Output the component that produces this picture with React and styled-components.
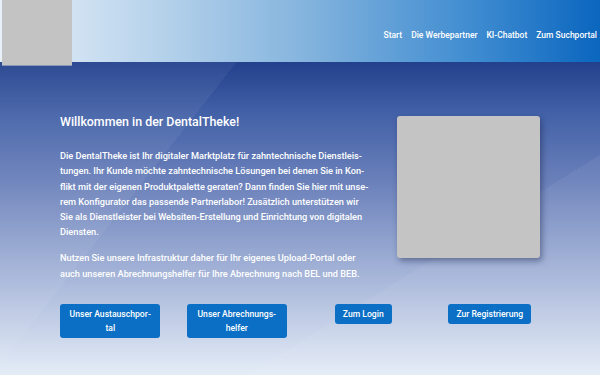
import React from "react";
import styled, { createGlobalStyle } from "styled-components";

const Global = createGlobalStyle`
  html, body { margin: 0; padding: 0; }
  body { font-family: Roboto, "Noto Sans", "Liberation Sans", sans-serif; }
  * { box-sizing: border-box; }
`;

const Page = styled.div`
  width: 100%;
  min-height: 100vh;
  display: flex;
  flex-direction: column;
`;

const Header = styled.header`
  height: 62px;
  display: flex;
  align-items: flex-start;
  background: linear-gradient(90deg, #e8f0f9 0%, #b9d4ec 25%, #86b5de 50%, #3c8ad0 80%, #0b66be 100%);
  position: relative;
  z-index: 2;
`;

const Logo = styled.div`
  width: 70px;
  height: 66px;
  margin-left: 2px;
  background: #c3c3c3;
  border-bottom: 1px solid #8a98b6;
  flex: none;
`;

const Nav = styled.nav`
  margin-left: auto;
  margin-right: 3px;
  height: 62px;
  display: flex;
  align-items: center;
  gap: 9px;
  padding-top: 7px;
`;

const NavLink = styled.a`
  color: #fff;
  font-size: 8.5px;
  font-weight: 500;
  text-decoration: none;
  white-space: nowrap;
`;

const Main = styled.main`
  flex: 1;
  position: relative;
  overflow: hidden;
  background:
    linear-gradient(128deg, rgba(255,255,255,0.05) 0 28%, rgba(255,255,255,0) 28%),
    linear-gradient(148deg, rgba(255,255,255,0) 0 68%, rgba(255,255,255,0.05) 68%),
    linear-gradient(180deg, #22408c 0%, #4462a8 17%, #6a80ba 38%, #a9b8da 70%, #e4ecf7 100%);
  padding-top: 52px;
  padding-bottom: 30px;
`;

const Hero = styled.section`
  display: flex;
  align-items: flex-start;
  padding-left: 60px;
`;

const TextCol = styled.div`
  width: 311px;
  color: #fff;
`;

const Title = styled.h1`
  margin: 0 0 18px;
  font-size: 12.4px;
  line-height: 16px;
  font-weight: 500;
`;

const Para = styled.p`
  margin: 0 0 10.5px;
  font-size: 9.2px;
  line-height: 15.3px;
  font-weight: 500;
  &:last-child { margin-bottom: 0; }
`;

const ImageBox = styled.div`
  width: 143px;
  height: 142px;
  margin-left: 26px;
  margin-top: 2px;
  background: #c4c4c4;
  border-radius: 3px;
  box-shadow: 2px 3px 6px rgba(20, 30, 70, 0.45);
  flex: none;
`;

const Actions = styled.div`
  display: grid;
  grid-template-columns: repeat(4, 126.5px);
  justify-items: center;
  align-items: start;
  margin-left: 47px;
  margin-top: 23px;
`;

const Button = styled.a`
  display: block;
  max-width: 100px;
  width: ${(p) => (p.$wide ? "100px" : "auto")};
  padding: 3px 8px;
  background: #0b6fc5;
  color: #fff;
  font-size: 8.6px;
  line-height: 14px;
  font-weight: 500;
  text-align: center;
  border-radius: 3px;
  text-decoration: none;
  white-space: ${(p) => (p.$wide ? "normal" : "nowrap")};
`;

export default function App() {
  return (
    <Page lang="de">
      <Global />
      <Header>
        <Logo />
        <Nav>
          <NavLink href="#">Start</NavLink>
          <NavLink href="#">Die Werbepartner</NavLink>
          <NavLink href="#">KI-Chatbot</NavLink>
          <NavLink href="#">Zum Suchportal</NavLink>
        </Nav>
      </Header>
      <Main>
        <Hero>
          <TextCol>
            <Title>Willkommen in der DentalTheke!</Title>
            <Para>
              Die DentalTheke ist Ihr digitaler Marktplatz für zahntechnische Dienstleis{"\u00AD"}tungen. Ihr Kunde möchte zahntechnische Lösungen bei denen Sie in Kon{"\u00AD"}flikt mit der eigenen Produktpalette geraten? Dann finden Sie hier mit unse{"\u00AD"}rem Konfigurator das passende Partnerlabor! Zusätzlich unterstützen wir Sie als Dienstleister bei Websiten-Erstellung und Einrichtung von digitalen Diensten.
            </Para>
            <Para>
              Nutzen Sie unsere Infrastruktur daher für Ihr eigenes Upload-Portal oder auch unseren Abrechnungshelfer für Ihre Abrechnung nach BEL und BEB.
            </Para>
          </TextCol>
          <ImageBox />
        </Hero>
        <Actions>
          <Button href="#" $wide>Unser Austauschpor{"\u00AD"}tal</Button>
          <Button href="#" $wide>Unser Abrechnungs{"\u00AD"}helfer</Button>
          <Button href="#">Zum Login</Button>
          <Button href="#">Zur Registrierung</Button>
        </Actions>
      </Main>
    </Page>
  );
}
